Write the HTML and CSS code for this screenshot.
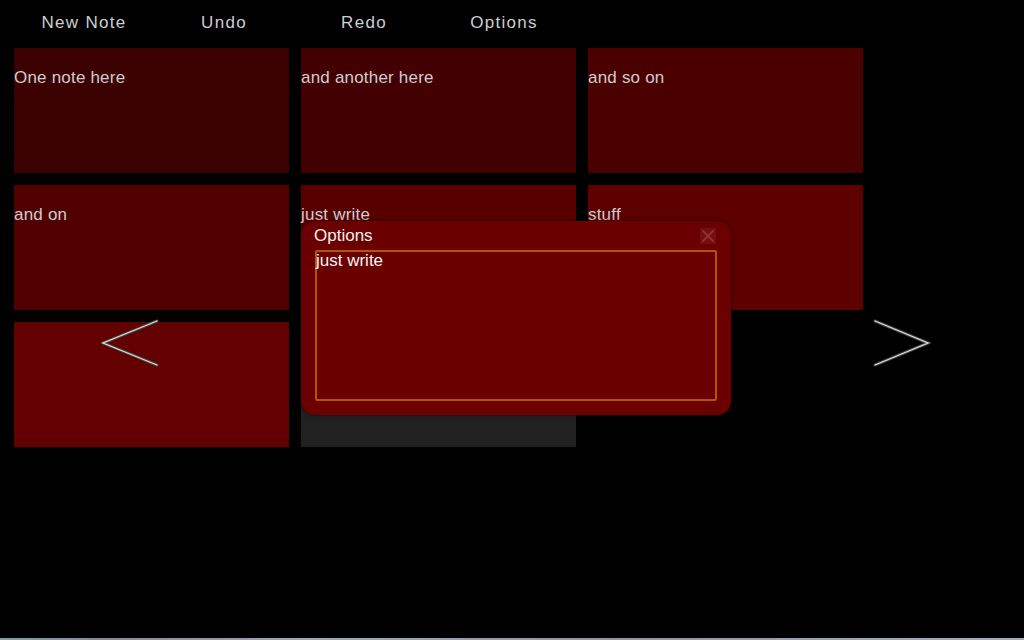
FILE: index.html
```html
<!DOCTYPE html>
<html>
<head>
<meta charset="utf-8">
<title>Notes</title>
<link rel="stylesheet" href="styles.css">
</head>
<body>
<div class="app">
  <nav class="menu">
    <div class="menu-item">New Note</div>
    <div class="menu-item">Undo</div>
    <div class="menu-item">Redo</div>
    <div class="menu-item">Options</div>
  </nav>
  <main class="board">
    <div class="note n1"><p>One note here</p></div>
    <div class="note n2"><p>and another here</p></div>
    <div class="note n3"><p>and so on</p></div>
    <div class="note n4"><p>and on</p></div>
    <div class="note n5"><p>just write</p></div>
    <div class="note n6"><p>stuff</p></div>
    <div class="note n7"></div>
    <div class="note empty"></div>
  </main>

  <svg class="arrow arrow-left" width="60" height="50" viewBox="0 0 60 50">
    <polyline points="56,3 2,25 56,47" fill="none" stroke="#444" stroke-width="3" stroke-linecap="round" stroke-linejoin="miter"/>
    <polyline points="56,3 2,25 56,47" fill="none" stroke="#dcdcdc" stroke-width="1.3" stroke-linecap="round" stroke-linejoin="miter"/>
  </svg>
  <svg class="arrow arrow-right" width="60" height="50" viewBox="0 0 60 50">
    <polyline points="4,3 57,25 4,47" fill="none" stroke="#444" stroke-width="3" stroke-linecap="round" stroke-linejoin="miter"/>
    <polyline points="4,3 57,25 4,47" fill="none" stroke="#dcdcdc" stroke-width="1.3" stroke-linecap="round" stroke-linejoin="miter"/>
  </svg>

  <section class="dialog">
    <header class="dialog-head">
      <span class="dialog-title">Options</span>
      <span class="dialog-close">
        <svg width="16" height="16" viewBox="0 0 16 16">
          <line x1="2.5" y1="2.5" x2="13.5" y2="13.5" stroke="#963838" stroke-width="1.6"/>
          <line x1="13.5" y1="2.5" x2="2.5" y2="13.5" stroke="#963838" stroke-width="1.6"/>
        </svg>
      </span>
    </header>
    <div class="dialog-text">just write</div>
  </section>
  <div class="taskbar"></div>
</div>
</body>
</html>
```

FILE: styles.css
```css
html, body {
  margin: 0;
  padding: 0;
  background: #000;
  height: 100%;
  overflow: hidden;
}

.app {
  position: relative;
  width: 1024px;
  height: 640px;
  font-family: "Liberation Sans", Arial, sans-serif;
  color: #cfcfcf;
}

.menu {
  display: flex;
  padding-left: 14px;
  height: 48px;
}

.menu-item {
  width: 140px;
  text-align: center;
  font-size: 17px;
  letter-spacing: 1.3px;
  line-height: 20px;
  padding-top: 13px;
  color: #cdcdd2;
}

.board {
  display: grid;
  grid-template-columns: repeat(3, 275px);
  grid-auto-rows: 125px;
  gap: 12px;
  padding-left: 14px;
}

.note p {
  margin: 0;
  padding-top: 20px;
  font-size: 17px;
  letter-spacing: 0.2px;
  line-height: 20px;
  color: #cdcdd2;
}

.n1 { background: #3b0000; }
.n2 { background: #430000; }
.n3 { background: #4b0000; }
.n4 { background: #500000; }
.n5 { background: #580000; }
.n6 { background: #5e0000; }
.n7 { background: #630000; }
.empty { background: #212121; }

.arrow {
  position: absolute;
  top: 318px;
}
.arrow-left { left: 101px; }
.arrow-right { left: 871px; }

.dialog {
  position: absolute;
  left: 301px;
  top: 221px;
  width: 430px;
  height: 194px;
  box-sizing: border-box;
  background: #6a0000;
  border-radius: 14px;
  box-shadow: 0 0 4px rgba(0, 0, 0, 0.6);
  padding: 5px 14px 0 14px;
}

.dialog-head {
  display: flex;
  justify-content: space-between;
  align-items: flex-start;
  height: 20px;
  margin-bottom: 4px;
}

.dialog-title {
  font-size: 17px;
  line-height: 20px;
  color: #f0f0f0;
  margin-left: -1px;
}

.dialog-close {
  display: flex;
  width: 16px;
  height: 16px;
  margin-right: 1px;
  margin-top: 2px;
  background: #761010;
}

.dialog-text {
  width: 402px;
  height: 151px;
  box-sizing: border-box;
  border: 2px solid #b05800;
  border-radius: 2px;
  font-size: 17px;
  line-height: 18px;
  color: #f4f4f4;
  text-indent: -1px;
}

.taskbar {
  position: absolute;
  left: 0;
  bottom: 0;
  width: 100%;
  height: 2px;
  background: linear-gradient(90deg, #8a9aa8 0%, #7e8c98 10%, #9aa8b4 30%, #8a98a4 60%, #a0acb8 100%);
}
```
